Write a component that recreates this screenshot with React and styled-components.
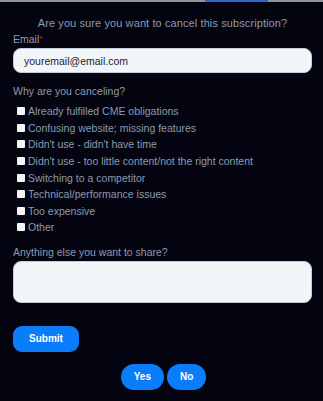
import React, { useState } from "react";
import styled, { createGlobalStyle } from "styled-components";

const GlobalStyle = createGlobalStyle`
  html, body {
    margin: 0;
    padding: 0;
    background: #03040f;
  }
  body {
    font-family: "Liberation Sans", Arial, sans-serif;
  }
`;

const Page = styled.div`
  width: 323px;
  height: 401px;
  background: #03040f;
  overflow: hidden;
  display: flex;
  flex-direction: column;
`;

const TopEdge = styled.div`
  height: 2px;
  background: #8f939a;
  display: flex;
  padding-left: 205px;
`;

const ClippedLink = styled.div`
  width: 63px;
  height: 2px;
  background: #2f64c9;
`;

const Form = styled.form`
  display: flex;
  flex-direction: column;
  align-items: flex-start;
  padding: 0 11px 0 13px;
`;

const Title = styled.h2`
  align-self: stretch;
  margin: 14px 0 0;
  font-size: 11px;
  font-weight: normal;
  line-height: 14px;
  letter-spacing: 0.1px;
  color: #8c9bb1;
  text-align: center;
`;

const Label = styled.label`
  display: block;
  font-size: 10.5px;
  line-height: 14px;
  color: #8c9bb1;
  margin-top: ${({ $top }) => $top}px;
`;

const Required = styled.span`
  color: #e0242d;
  font-size: 8px;
  vertical-align: top;
`;

const Input = styled.input`
  display: block;
  box-sizing: border-box;
  width: 299px;
  height: 25px;
  margin-top: 2px;
  padding: 0 10px;
  border: 1px solid #c3ccd8;
  border-radius: 8px;
  background: #f3f6f9;
  font-family: inherit;
  font-size: 10.5px;
  color: #1b2230;
  outline: none;
`;

const Options = styled.div`
  display: flex;
  flex-direction: column;
  margin-top: 5px;
  padding-left: 4px;
`;

const Option = styled.label`
  display: flex;
  align-items: center;
  height: 16.6px;
  font-size: 10.5px;
  color: #8c9bb1;
`;

const Box = styled.input`
  appearance: none;
  width: 8px;
  height: 8px;
  margin: 0 3px 0 0;
  background: #f4f5f7;
  border: none;
  border-radius: 1px;
`;

const TextArea = styled.textarea`
  display: block;
  box-sizing: border-box;
  width: 299px;
  height: 42px;
  margin-top: 2px;
  border: 1px solid #c3ccd8;
  border-radius: 8px;
  background: #f3f6f9;
  resize: none;
  outline: none;
`;

const Button = styled.button`
  height: 26px;
  padding: 0 ${({ $pad }) => $pad}px;
  border: none;
  border-radius: ${({ $round }) => ($round ? "13px" : "9px")};
  background: #0a7dfb;
  color: #ffffff;
  font-family: inherit;
  font-size: 10px;
  font-weight: bold;
  cursor: pointer;
`;

const SubmitRow = styled.div`
  display: flex;
  margin-top: 23px;
`;

const ConfirmRow = styled.div`
  align-self: stretch;
  display: flex;
  justify-content: center;
  gap: 3px;
  margin-top: 12px;
  padding-left: 2px;
`;

const reasons = [
  "Already fulfilled CME obligations",
  "Confusing website; missing features",
  "Didn't use - didn't have time",
  "Didn't use - too little content/not the right content",
  "Switching to a competitor",
  "Technical/performance issues",
  "Too expensive",
  "Other",
];

const App = () => {
  const [email, setEmail] = useState("youremail@email.com");

  return (
    <Page>
      <GlobalStyle />
      <TopEdge>
        <ClippedLink />
      </TopEdge>
      <Form onSubmit={(e) => e.preventDefault()}>
        <Title>Are you sure you want to cancel this subscription?</Title>
        <Label $top={2}>
          Email<Required>*</Required>
        </Label>
        <Input value={email} onChange={(e) => setEmail(e.target.value)} />
        <Label $top={11}>Why are you canceling?</Label>
        <Options>
          {reasons.map((r) => (
            <Option key={r}>
              <Box type="checkbox" />
              {r}
            </Option>
          ))}
        </Options>
        <Label $top={9}>Anything else you want to share?</Label>
        <TextArea />
        <SubmitRow>
          <Button type="submit" $pad={16}>
            Submit
          </Button>
        </SubmitRow>
        <ConfirmRow>
          <Button type="button" $pad={13} $round>
            Yes
          </Button>
          <Button type="button" $pad={13} $round>
            No
          </Button>
        </ConfirmRow>
      </Form>
    </Page>
  );
};

export default App;
